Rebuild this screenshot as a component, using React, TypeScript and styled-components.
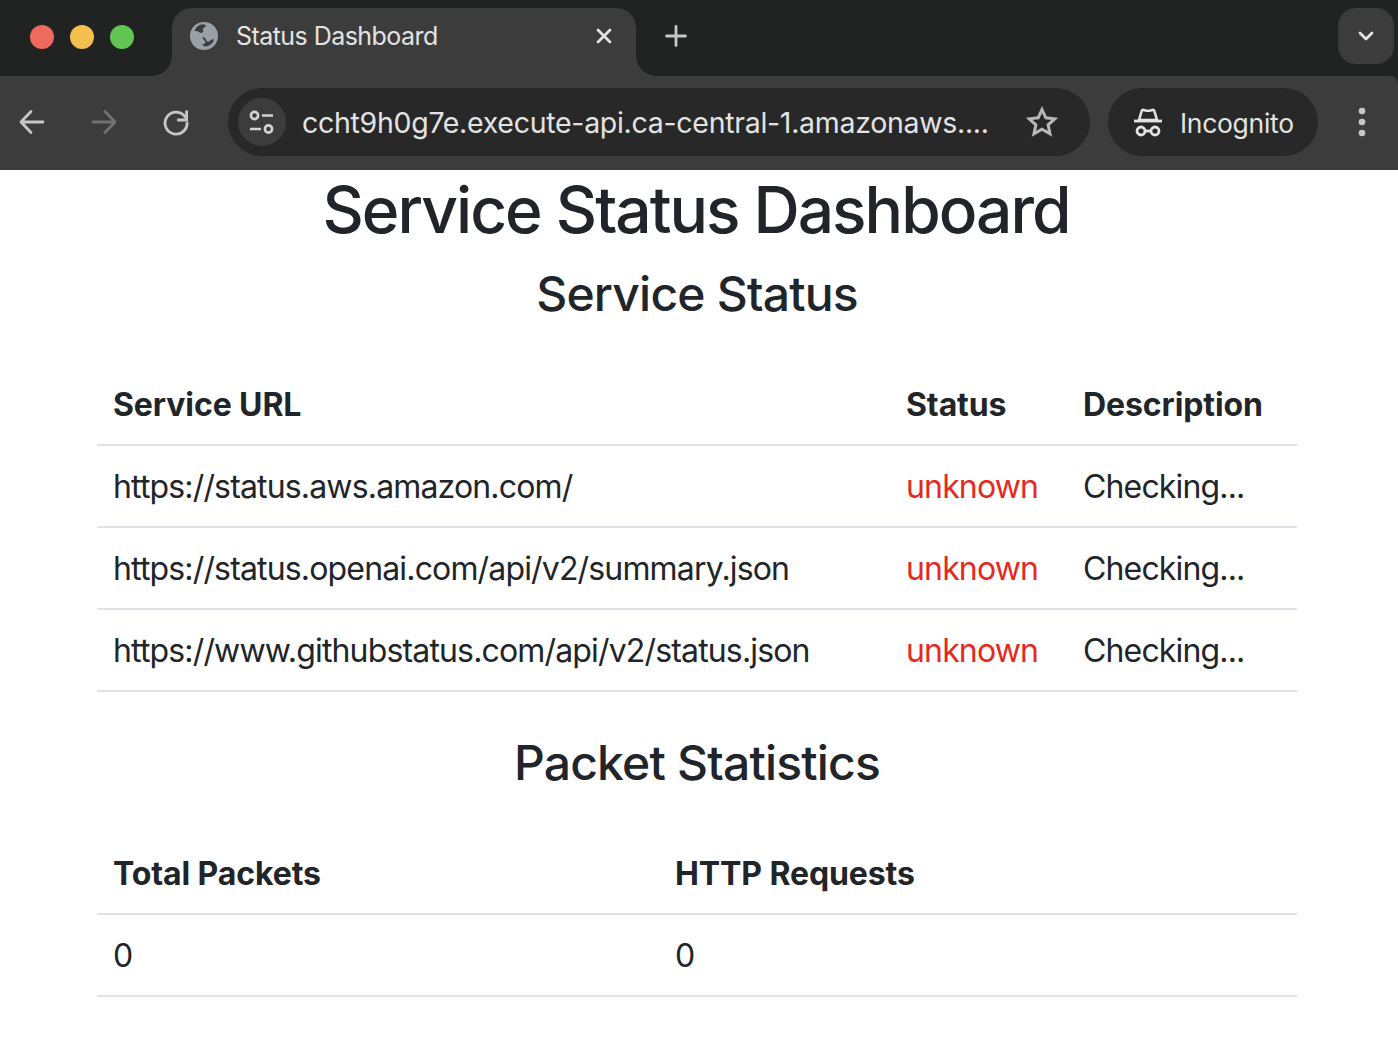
import React from "react";
import styled, { createGlobalStyle } from "styled-components";

const Global = createGlobalStyle`
  html, body { margin: 0; padding: 0; background: #fff; }
  body { font-family: Inter, "Liberation Sans", sans-serif; color: #212529; }
  * { box-sizing: border-box; }
`;

const UI = `Inter, "Liberation Sans", sans-serif`;

const Chrome = styled.header`
  background: #212323;
`;
const Strip = styled.div`
  height: 76px;
  display: flex;
  align-items: flex-start;
  padding: 8px 4px 0 30px;
`;
const Lights = styled.div`
  display: flex;
  gap: 16px;
  margin-top: 17px;
`;
const Light = styled.span<{ $c: string }>`
  width: 24px;
  height: 24px;
  border-radius: 50%;
  background: ${(p) => p.$c};
`;
const Tab = styled.div`
  position: relative;
  margin-left: 38px;
  width: 464px;
  height: 68px;
  background: #3c3c3c;
  border-radius: 20px 20px 0 0;
  display: flex;
  align-items: flex-start;
  padding: 14px 20px 0 18px;
  &::before, &::after {
    content: "";
    position: absolute;
    bottom: 0;
    width: 20px;
    height: 20px;
  }
  &::before { left: -20px; background: radial-gradient(circle at 0 0, #212323 19.5px, #3c3c3c 20px); }
  &::after { right: -20px; background: radial-gradient(circle at 100% 0, #212323 19.5px, #3c3c3c 20px); }
`;
const TabTitle = styled.span`
  font: 400 25px/28px ${UI};
  letter-spacing: -0.55px;
  color: #e3e3e3;
  margin-left: 18px;
  flex: 1;
  white-space: nowrap;
`;
const TabClose = styled.svg`
  width: 28px;
  height: 28px;
  margin-right: -2px;
`;
const NewTab = styled.svg`
  width: 28px;
  height: 28px;
  margin: 14px 0 0 26px;
`;
const Spacer = styled.div`
  flex: 1;
`;
const ListBtn = styled.div`
  width: 56px;
  height: 56px;
  border-radius: 18px;
  background: #3c3c3c;
  display: flex;
  align-items: center;
  justify-content: center;
`;
const Toolbar = styled.div`
  height: 94px;
  background: #3c3c3c;
  border-top-right-radius: 8px;
  display: flex;
  align-items: center;
  padding: 0 0 2px 18px;
`;
const NavBtn = styled.svg`
  width: 28px;
  height: 28px;
  margin-right: 44px;
  flex: none;
`;
const Omni = styled.div`
  width: 862px;
  height: 68px;
  margin-left: -6px;
  border-radius: 34px;
  background: #282828;
  display: flex;
  align-items: center;
  padding: 0 32px 0 10px;
`;
const SiteBtn = styled.div`
  width: 48px;
  height: 48px;
  border-radius: 50%;
  background: #3c3c3c;
  display: flex;
  align-items: center;
  justify-content: center;
  flex: none;
`;
const Url = styled.span`
  font: 400 28.5px/36px ${UI};
  letter-spacing: -0.29px;
  color: #e3e3e3;
  margin-left: 16px;
  padding-top: 2px;
  flex: 1;
  white-space: nowrap;
`;
const Pill = styled.div`
  width: 210px;
  height: 68px;
  margin-left: 18px;
  border-radius: 34px;
  background: #282828;
  display: flex;
  align-items: center;
  padding-left: 24px;
`;
const PillText = styled.span`
  font: 400 26.5px/34px ${UI};
  letter-spacing: -0.3px;
  color: #e3e3e3;
  margin-left: 16px;
  padding-top: 2px;
`;
const Menu = styled.svg`
  width: 12px;
  height: 36px;
  margin-left: 38px;
`;

const Page = styled.main`
  padding: 0 101px 0 97px;
`;
const H1 = styled.h1`
  margin: 0 0 13px;
  font: 500 64px/79px ${UI};
  letter-spacing: -1.98px;
  text-indent: -2px;
  text-align: center;
  color: #212529;
`;
const H2 = styled.h2<{ $top?: number }>`
  margin: ${(p) => p.$top ?? 0}px 0 38px;
  font: 500 48px/64px ${UI};
  letter-spacing: -0.8px;
  text-align: center;
  color: #212529;
`;
const Table = styled.table`
  width: 1200px;
  border-collapse: collapse;
  table-layout: fixed;
  font: 400 32px/48px ${UI};
`;
const Th = styled.th<{ $w?: number }>`
  width: ${(p) => (p.$w ? `${p.$w}px` : "auto")};
  padding: 17px 16px 15px;
  text-align: left;
  font-weight: 700;
  letter-spacing: -0.1px;
  border-bottom: 2px solid #dee2e6;
  white-space: nowrap;
`;
const Td = styled.td<{ $red?: boolean }>`
  padding: 17px 16px 15px;
  border-bottom: 2px solid #dee2e6;
  letter-spacing: -0.84px;
  color: ${(p) => (p.$red ? "#e8281c" : "#212529")};
  white-space: nowrap;
`;

const stroke = { fill: "none", strokeLinecap: "round" as const, strokeLinejoin: "round" as const };

const services = [
  "https://status.aws.amazon.com/",
  "https://status.openai.com/api/v2/summary.json",
  "https://www.githubstatus.com/api/v2/status.json",
];

export default function App() {
  return (
    <>
      <Global />
      <Chrome>
        <Strip>
          <Lights>
            <Light $c="#ec6a5e" />
            <Light $c="#f4bf4f" />
            <Light $c="#61c554" />
          </Lights>
          <Tab>
            <svg width="28" height="28" viewBox="0 0 28 28">
              <circle cx="14" cy="14" r="14" fill="#9aa0a6" />
              <path d="M11 2.500c-3 1.200-5.600 3.600-6.600 6.500 1.800 0 3.600.2 4.800 1.200 1.400 1.200 3.200 1 4-.6.4-.9-.4-1.800-.2-2.800.2-1.200 2-1 2.600-2.200.3-.7-.1-1.600-.8-2.200z" fill="#3c3c3c" />
              <path d="M12.500 15c2 .2 3.300 1.600 3.800 3.200.4 1.300 1.500 1.800 2.700 1.300 1.400-.6 2.200-2.200 4-2.200.5 0 .8.100 1 .2-.8 3-3 5.400-6 6.600-2.300.8-4.600.3-6-1.600 1.800-.3 3.600-.8 3.400-2.300-.2-1.600-2.700-2.400-2.900-5.200z" fill="#3c3c3c" />
            </svg>
            <TabTitle>Status Dashboard</TabTitle>
            <TabClose viewBox="0 0 28 28">
              <path d="M8 8l12 12M20 8L8 20" stroke="#e3e3e3" strokeWidth="2.800" {...stroke} />
            </TabClose>
          </Tab>
          <NewTab viewBox="0 0 28 28">
            <path d="M14 4.500v19M4.500 14h19" stroke="#c7c7c7" strokeWidth="2.800" {...stroke} />
          </NewTab>
          <Spacer />
          <ListBtn>
            <svg width="22" height="22" viewBox="0 0 22 22">
              <path d="M5 8l6 6 6-6" stroke="#e3e3e3" strokeWidth="2.800" {...stroke} />
            </svg>
          </ListBtn>
        </Strip>
        <Toolbar>
          <NavBtn viewBox="0 0 28 28">
            <path d="M25 14H3.500M13 3.500L3 14l10 10.500" stroke="#c7c7c7" strokeWidth="2.800" {...stroke} />
          </NavBtn>
          <NavBtn viewBox="0 0 28 28">
            <path d="M3 14h21.500M15 3.500L25 14 15 24.500" stroke="#727272" strokeWidth="2.800" {...stroke} />
          </NavBtn>
          <NavBtn viewBox="0 0 28 28">
            <path d="M23.500 9.500A11 11 0 1 0 25 14" stroke="#c7c7c7" strokeWidth="2.800" fill="none" strokeLinecap="butt" />
            <path d="M24.600 2.500v9.500h-9.500" stroke="#c7c7c7" strokeWidth="2.800" fill="none" strokeLinecap="butt" />
          </NavBtn>
          <Omni>
            <SiteBtn>
              <svg width="28" height="28" viewBox="0 0 28 28">
                <circle cx="6.500" cy="7.500" r="3.600" stroke="#d4d4d4" strokeWidth="2.600" fill="none" />
                <path d="M14 7.500h11M2 21h11" stroke="#d4d4d4" strokeWidth="2.600" fill="none" />
                <circle cx="20.500" cy="21" r="3.600" stroke="#d4d4d4" strokeWidth="2.600" fill="none" />
              </svg>
            </SiteBtn>
            <Url>ccht9h0g7e.execute-api.ca-central-1.amazonaws....</Url>
            <svg width="32" height="32" viewBox="0 0 32 32">
              <path d="M16 3.500l3.800 8.300 9 1-6.700 6.100 1.900 8.900L16 23.300 8 27.800l1.900-8.900L3.200 12.800l9-1z" stroke="#b8b8b8" strokeWidth="3" fill="none" strokeLinejoin="miter" />
            </svg>
          </Omni>
          <Pill>
            <svg width="32" height="32" viewBox="0 0 32 32">
              <path d="M7 14l2.500-8.500q.4-2 2.300-1.500l1.700.5q2.500.6 5 0l1.700-.5q1.900-.5 2.300 1.500L25 14z" stroke="#e3e3e3" strokeWidth="2.600" fill="none" />
              <path d="M2 15h28" stroke="#e3e3e3" strokeWidth="2.800" fill="none" />
              <circle cx="9" cy="25" r="4" stroke="#e3e3e3" strokeWidth="2.800" fill="none" />
              <circle cx="23" cy="25" r="4" stroke="#e3e3e3" strokeWidth="2.800" fill="none" />
              <path d="M13 25h6" stroke="#e3e3e3" strokeWidth="2.800" fill="none" />
            </svg>
            <PillText>Incognito</PillText>
          </Pill>
          <Menu viewBox="0 0 12 36">
            <circle cx="6" cy="7" r="3.300" fill="#c7c7c7" />
            <circle cx="6" cy="18" r="3.300" fill="#c7c7c7" />
            <circle cx="6" cy="29" r="3.300" fill="#c7c7c7" />
          </Menu>
        </Toolbar>
      </Chrome>
      <Page>
        <H1>Service Status Dashboard</H1>
        <H2>Service Status</H2>
        <Table>
          <thead>
            <tr>
              <Th $w={793}>Service URL</Th>
              <Th $w={177}>Status</Th>
              <Th>Description</Th>
            </tr>
          </thead>
          <tbody>
            {services.map((s) => (
              <tr key={s}>
                <Td>{s}</Td>
                <Td $red>unknown</Td>
                <Td>Checking...</Td>
              </tr>
            ))}
          </tbody>
        </Table>
        <H2 $top={39}>Packet Statistics</H2>
        <Table>
          <thead>
            <tr>
              <Th $w={562}>Total Packets</Th>
              <Th>HTTP Requests</Th>
            </tr>
          </thead>
          <tbody>
            <tr>
              <Td>0</Td>
              <Td>0</Td>
            </tr>
          </tbody>
        </Table>
      </Page>
    </>
  );
}
